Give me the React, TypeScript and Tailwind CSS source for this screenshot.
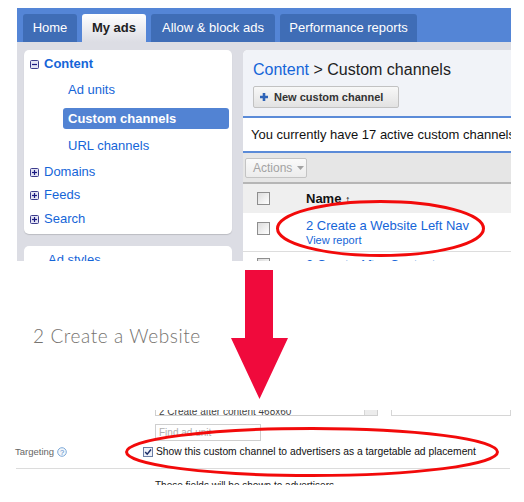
import React from 'react';

const tabs = [
  { label: 'Home', width: 'w-[54px]' },
  { label: 'My ads', width: 'w-[64px]', active: true },
  { label: 'Allow & block ads', width: 'w-[124px]' },
  { label: 'Performance reports', width: 'w-[137px]' },
];

function TreeBox({ open }: { open: boolean }) {
  return (
    <svg width="9" height="9" viewBox="0 0 9 9" className="shrink-0">
      <rect x="0.5" y="0.5" width="8" height="8" rx="1" fill="#e4e4f4" stroke="#3c3c8c" />
      <path d="M2 4.5h5" stroke="#1a1a80" strokeWidth="1.2" />
      {!open && <path d="M4.5 2v5" stroke="#1a1a80" strokeWidth="1.2" />}
    </svg>
  );
}

function Checkbox() {
  return (
    <div className="w-[13px] h-[13px] shrink-0 border border-[#8e8e8e] bg-gradient-to-br from-[#dcdcdc] to-white" />
  );
}

function Header() {
  return (
    <div className="h-[34px] bg-[#5485d6] flex items-end gap-[5px] pl-[6px]">
      {tabs.map((t) => (
        <div
          key={t.label}
          className={`${t.width} h-[28px] rounded-t-[3px] flex items-center justify-center text-[13px] ${
            t.active
              ? 'bg-gradient-to-b from-white to-[#dcdde4] text-[#222] font-bold'
              : 'bg-[#3f6db6] text-white'
          }`}
        >
          {t.label}
        </div>
      ))}
    </div>
  );
}

function Sidebar() {
  return (
    <div className="w-[208px] shrink-0 flex flex-col">
      <div className="h-[184px] bg-white rounded-[5px] shadow-[0_1px_1px_rgba(0,0,0,0.15)] pt-[4px] text-[13px] text-[#1565d8]">
        <div className="h-[20px] flex items-center pl-[6px] gap-[5px]">
          <TreeBox open />
          <span className="font-bold">Content</span>
        </div>
        <div className="h-[20px] mt-[6px] flex items-center pl-[44px]">Ad units</div>
        <div className="h-[21px] mt-[8px] ml-[39px] mr-[3px] rounded-[3px] bg-[#5283d3] flex items-center pl-[5px] text-white font-bold">
          Custom channels
        </div>
        <div className="h-[20px] mt-[7px] flex items-center pl-[44px]">URL channels</div>
        <div className="h-[20px] mt-[6px] flex items-center pl-[6px] gap-[5px]">
          <TreeBox open={false} />
          <span>Domains</span>
        </div>
        <div className="h-[20px] mt-[3px] flex items-center pl-[6px] gap-[5px]">
          <TreeBox open={false} />
          <span>Feeds</span>
        </div>
        <div className="h-[20px] mt-[4px] flex items-center pl-[6px] gap-[5px]">
          <TreeBox open={false} />
          <span>Search</span>
        </div>
      </div>
      <div className="h-[40px] mt-[12px] bg-white rounded-[5px] pt-[4px] pl-[24px] text-[13px] text-[#1565d8]">
        Ad styles
      </div>
    </div>
  );
}

function Main() {
  return (
    <div className="w-[300px] shrink-0 bg-white rounded-tl-[5px] overflow-hidden">
      <div className="h-[68px] bg-[#f1f3f8] border-b-2 border-[#5b8bd8] pl-[10px] pt-[10px]">
        <div className="text-[16px] leading-[20px] text-[#222]">
          <span className="text-[#1565d8]">Content</span> &gt; Custom channels
        </div>
        <div className="mt-[6px] w-[146px] h-[22px] border border-[#c2c2c2] rounded-[2px] bg-gradient-to-b from-[#f8f8f8] to-[#e2e2e2] flex items-center pl-[5px] gap-[5px]">
          <svg width="10" height="10" viewBox="0 0 10 10">
            <path d="M5 1v8M1 5h8" stroke="#2f64b8" strokeWidth="2.6" />
          </svg>
          <span className="text-[11px] font-bold text-[#333]">New custom channel</span>
        </div>
      </div>
      <div className="h-[35px] border-b-2 border-[#5b8bd8] flex items-center pl-[8px] text-[13px] text-[#111] whitespace-nowrap">
        You currently have 17 active custom channels.
      </div>
      <div className="h-[31px] bg-[#e6e6e6] border-b-2 border-[#b6b6b6] pl-[2px] pt-[5px]">
        <div className="w-[62px] h-[20px] border border-[#c4c4c4] rounded-[2px] bg-gradient-to-b from-[#fafafa] to-[#ececec] flex items-center pl-[7px] gap-[5px] text-[12px] text-[#a3a3a3]">
          Actions
          <svg width="7" height="4" viewBox="0 0 7 4">
            <path d="M0 0h7L3.5 4z" fill="#a3a3a3" />
          </svg>
        </div>
      </div>
      <div className="h-[29px] bg-[#efefef] flex items-center pl-[14px]">
        <Checkbox />
        <span className="ml-[36px] text-[13px] font-bold text-[#111]">
          Name <span className="text-[11px]">↑</span>
        </span>
      </div>
      <div className="h-[39px] border-b border-[#dddddd] flex items-start pl-[14px]">
        <div className="mt-[9px]">
          <Checkbox />
        </div>
        <div className="ml-[36px] pt-[5px] text-[#1565d8]">
          <div className="text-[13px] leading-[16px]">2 Create a Website Left Nav</div>
          <div className="text-[11px] leading-[13px]">View report</div>
        </div>
      </div>
      <div className="h-[30px] flex items-start pl-[14px]">
        <div className="mt-[6px]">
          <Checkbox />
        </div>
        <div className="ml-[36px] pt-[5px] text-[13px] leading-[16px] text-[#1565d8]">
          2 Create After Content
        </div>
      </div>
    </div>
  );
}

function Form() {
  return (
    <div className="text-[10px] text-[#222]">
      <div className="flex ml-[155px] gap-[13px]">
        <div className="w-[223px] h-[6px] border-x border-b border-[#cfcfcf] flex overflow-hidden">
          <div className="flex-1 flex items-end pl-[3px]">
            <span className="leading-[12px] -mb-[3px] text-[#444] whitespace-nowrap">2 Create after content 468x60</span>
          </div>
          <div className="w-[13px] bg-[#ececec] border-l border-[#d6d6d6]" />
        </div>
        <div className="w-[120px] h-[6px] border-x border-b border-[#d6d6d6]" />
      </div>
      <div className="ml-[155px] mt-[8px] w-[106px] h-[17px] border border-[#cfcfcf] flex items-center pl-[3px] text-[#b0b0b0]">
        Find ad unit
      </div>
      <div className="mt-[3px] h-[16px] flex items-center">
        <div className="w-[143px] pl-[15px] flex items-center gap-[3px] text-[#666] text-[9.5px]">
          Targeting
          <svg width="10" height="10" viewBox="0 0 10 10">
            <circle cx="5" cy="5" r="4.3" fill="#f2f7fc" stroke="#7ea9d8" strokeWidth="1" />
            <text x="5" y="8" textAnchor="middle" fontSize="7.5" fontFamily="Liberation Sans, Arial, sans-serif" fill="#4a86c5">?</text>
          </svg>
        </div>
        <svg width="10" height="10" viewBox="0 0 10 10" className="shrink-0">
          <rect x="0.5" y="0.5" width="9" height="9" fill="#eef1f8" stroke="#6b7ea6" />
          <path d="M2.2 5l2 2.2L8 2.6" fill="none" stroke="#1d2f6a" strokeWidth="1.5" />
        </svg>
        <span className="ml-[3px] whitespace-nowrap text-[10.3px] text-[#111]">
          Show this custom channel to advertisers as a targetable ad placement
        </span>
      </div>
      <div className="mt-[8px] ml-[16px] mr-[14px] border-t border-[#dcdcdc]" />
      <div className="h-[16px] overflow-hidden pl-[155px]">
        <div className="mt-[11px] leading-[12px] whitespace-nowrap">These fields will be shown to advertisers</div>
      </div>
    </div>
  );
}

export default function App() {
  return (
    <div className="relative w-[524px] h-[502px] overflow-hidden bg-white font-['Liberation_Sans',Arial,sans-serif]">
      {/* screenshot of the ads page */}
      <div className="ml-[17px] mt-[8px] w-[494px] h-[253px] overflow-hidden bg-[#dcdde4]">
        <Header />
        <div className="flex gap-[11px] pl-[7px] pt-[8px]">
          <Sidebar />
          <Main />
        </div>
      </div>

      <h2 className="mt-[63px] ml-[33px] h-[24px] leading-[24px] text-[19px] font-light tracking-[0.6px] text-[#76736f] font-['Lato',sans-serif]">
        2 Create a Website
      </h2>

      <div className="mt-[62px]">
        <Form />
      </div>

      {/* annotations */}
      <svg className="absolute inset-0 pointer-events-none" width="524" height="502" viewBox="0 0 524 502">
        <polygon points="245,270 273,270 273,338 288,338 259.5,399 231,338 245,338" fill="#f00a3c" />
        <ellipse cx="380.5" cy="228.5" rx="103" ry="27" fill="none" stroke="#f20a0a" strokeWidth="3" />
        <ellipse cx="312" cy="452" rx="185.5" ry="23.5" fill="none" stroke="#f20a0a" strokeWidth="3" />
      </svg>
    </div>
  );
}
